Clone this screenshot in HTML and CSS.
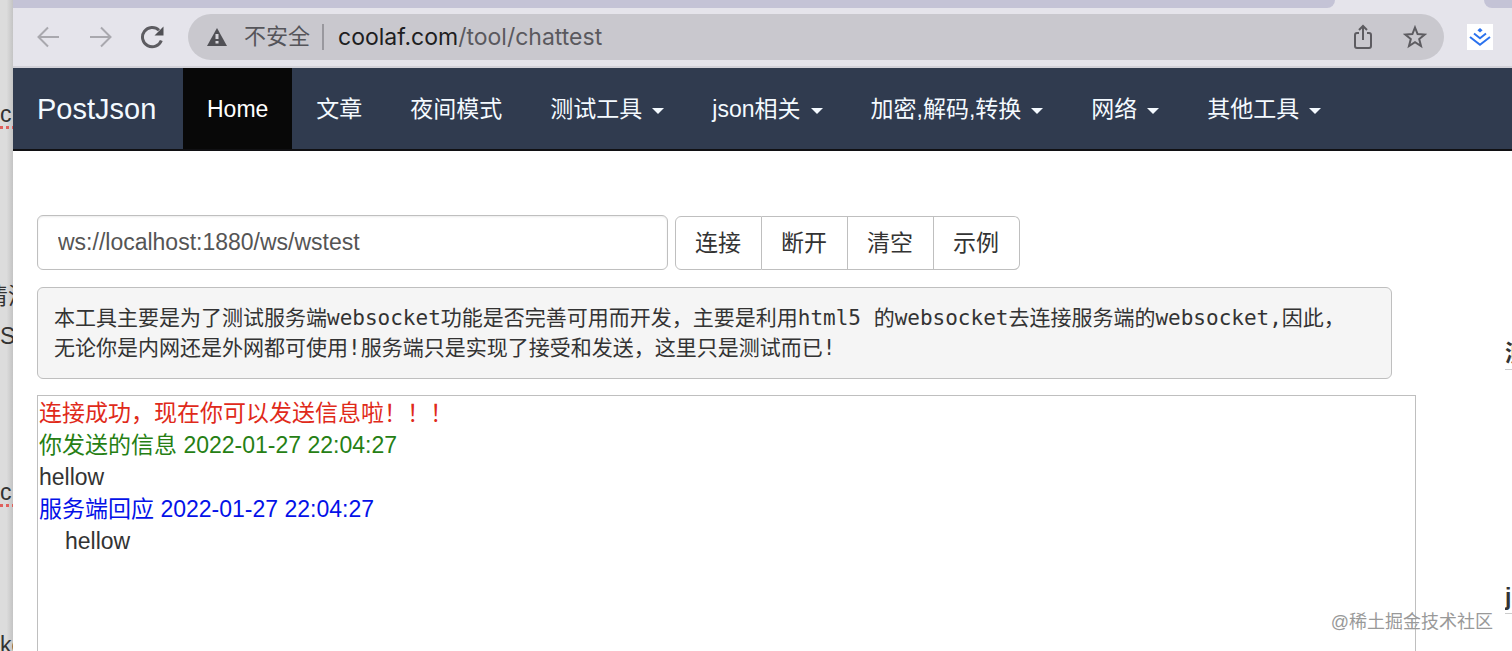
FILE: index.html
```html
<!DOCTYPE html>
<html lang="zh-CN">
<head>
    <meta charset="UTF-8">
    <meta name="viewport" content="width=device-width, initial-scale=1.0">
    <title>PostJson - websocket</title>
    <link rel="stylesheet" href="styles.css">
</head>
<body>
    <!-- document behind the browser window -->
    <div class="behind">
        <p class="misspelled first">c.</p>
        <p class="clipped">清清</p>
        <p class="next">S</p>
        <p class="misspelled later">c.</p>
        <p class="last">kc</p>
    </div>

    <div class="window">
        <div class="tab-strip">
            <div class="tabs-left"></div>
            <div class="tabs-right"></div>
        </div>

        <div class="toolbar">
            <button class="tool" type="button" aria-label="后退">
                <svg class="dim" width="24" height="24" viewBox="0 0 24 24"><path d="M23 12H3M12 2.500L2.500 12l9.500 9.500"/></svg>
            </button>
            <button class="tool" type="button" aria-label="前进">
                <svg class="dim" width="24" height="24" viewBox="0 0 24 24"><path d="M2 12h20M13 2.500l9.500 9.500-9.500 9.500"/></svg>
            </button>
            <button class="tool" type="button" aria-label="刷新">
                <svg class="reload" width="24" height="24" viewBox="0 0 24 24"><path d="M21.300 15.500A9.700 9.700 0 1 1 19 5.200"/><path class="solid" d="M23.500 1.500v9h-9z"/></svg>
            </button>
            <div class="omnibox">
                <svg class="warning" width="20" height="18" viewBox="0 0 20 18"><path class="solid" d="M10 0l10 18H0z"/><path class="mark" d="M10 6v5M10 13v2.500"/></svg>
                <span class="insecure">不安全</span>
                <span class="address">coolaf.com<span class="path">/tool/chattest</span></span>
                <button class="tool" type="button" aria-label="分享">
                    <svg width="24" height="26" viewBox="0 0 24 26"><path d="M8 9H6q-2 0-2 2v11q0 2 2 2h12q2 0 2-2V11q0-2-2-2h-2M12 16V2.500M8 6l4-4 4 4"/></svg>
                </button>
                <button class="tool" type="button" aria-label="收藏">
                    <svg width="24" height="24" viewBox="0 0 24 24"><path d="M12 2.500l2.600 6.600 7 .5-5.400 4.500 1.800 6.900-6-3.800-6 3.800 1.800-6.900L2.400 9.600l7-.5z"/></svg>
                </button>
            </div>
            <button class="extension" type="button" aria-label="稀土掘金">
                <svg width="26" height="26" viewBox="0 0 26 26"><path class="dot" d="M13 4l2.600 2.300L13 8.600l-2.600-2.300z"/><path d="M7 9.500l6 4.700 6-4.700M3 13l10 7.800L23 13"/></svg>
            </button>
        </div>

        <nav class="navbar">
            <a class="brand" href="#">PostJson</a>
            <a class="active" href="#">Home</a>
            <a href="#">文章</a>
            <a href="#">夜间模式</a>
            <a href="#">测试工具<span class="caret"></span></a>
            <a href="#">json相关<span class="caret"></span></a>
            <a href="#">加密,解码,转换<span class="caret"></span></a>
            <a href="#">网络<span class="caret"></span></a>
            <a href="#">其他工具<span class="caret"></span></a>
        </nav>

        <div class="content">
            <main class="main">
                <form class="connect">
                    <input class="form-control" type="text" aria-label="websocket地址" value="ws://localhost:1880/ws/wstest">
                    <div class="btn-group">
                        <button class="btn" type="button">连接</button>
                        <button class="btn" type="button">断开</button>
                        <button class="btn" type="button">清空</button>
                        <button class="btn" type="button">示例</button>
                    </div>
                </form>

                <pre class="intro">本工具主要是为了测试服务端websocket功能是否完善可用而开发，主要是利用html5 的websocket去连接服务端的websocket,因此，
无论你是内网还是外网都可使用!服务端只是实现了接受和发送，这里只是测试而已!</pre>

                <div class="log">
                    <p class="status">连接成功，现在你可以发送信息啦！！！</p>
                    <p class="sent">你发送的信息 2022-01-27 22:04:27</p>
                    <p>hellow</p>
                    <p class="received">服务端回应 2022-01-27 22:04:27</p>
                    <p class="reply">hellow</p>
                </div>
            </main>

            <aside class="sidebar">
                <h4>测试工具</h4>
                <h4>json相关</h4>
            </aside>
        </div>
    </div>

    <div class="watermark">@稀土掘金技术社区</div>
</body>
</html>
```
FILE: styles.css
```css
* {
    box-sizing: border-box;
}
body {
    display: flex;
    height: 100vh;
    margin: 0;
    overflow: hidden;
    background: #fff;
    color: #333;
    font-family: "Liberation Sans", "Noto Sans CJK SC", sans-serif;
    font-size: 23px;
    line-height: 32px;
}
p {
    margin: 0;
}
button {
    font: inherit;
    color: inherit;
}

/* document behind the window */
.behind {
    flex: 0 0 13px;
    overflow: hidden;
    white-space: nowrap;
    background: linear-gradient(to right, #dcdcdc 50%, #c4c4c4);
}
.behind .first {
    margin-top: 98px;
}
.behind .misspelled {
    text-decoration: underline dotted #e0605c 3px;
    text-underline-offset: 4px;
}
.behind .clipped {
    margin-top: 150px;
    text-indent: -15px;
}
.behind .next {
    margin-top: 8px;
}
.behind .later {
    margin-top: 124px;
}
.behind .last {
    margin-top: 121px;
}

/* browser chrome */
.window {
    display: flex;
    flex: 1;
    flex-direction: column;
    min-width: 0;
    background: #fff;
}
.tab-strip {
    display: flex;
    flex-shrink: 0;
    justify-content: space-between;
    height: 8px;
    background: #e5e4eb;
}
.tabs-left {
    flex: 1;
    margin-right: 149px;
    background: #c4c3d6;
    border-bottom-right-radius: 8px;
}
.tabs-right {
    width: 28px;
    background: #c4c3d6;
    border-bottom-left-radius: 8px;
}
.toolbar {
    display: flex;
    flex-shrink: 0;
    align-items: center;
    height: 60px;
    padding: 0 19px 0 23px;
    background: #e5e4eb;
    border-bottom: 2px solid #d2d1d8;
}
.tool,
.extension {
    display: flex;
    padding: 0;
    border: 0;
    background: none;
}
.tool {
    margin-right: 28px;
}
.toolbar svg {
    fill: none;
    stroke: #5d5c61;
    stroke-width: 2;
}
.toolbar .dim {
    stroke: #a9a8ae;
}
.toolbar .reload {
    stroke-width: 3;
}
.toolbar .solid {
    fill: #505055;
    stroke: none;
}
.toolbar .mark {
    stroke: #d5d4da;
    stroke-width: 3;
}
.omnibox {
    display: flex;
    flex: 1;
    align-items: center;
    height: 46px;
    margin: 0 23px 0 -4px;
    padding-left: 19px;
    background: #c9c8ce;
    border-radius: 23px;
}
.insecure {
    margin-left: 17px;
    padding-right: 12px;
    border-right: 2px solid #99989e;
    color: #55555a;
    font-size: 22px;
    line-height: 26px;
}
.address {
    flex: 1;
    margin-left: 14px;
    color: #1e1e22;
    font-family: Inter, "Noto Sans CJK SC", sans-serif;
}
.path {
    color: #5a595e;
}
.omnibox .tool:last-child {
    margin-right: 17px;
}
.extension {
    background: #fff;
}
.toolbar .extension svg {
    stroke: #2b72ee;
}
.toolbar .extension .dot {
    fill: #2b72ee;
    stroke: none;
}

/* site navigation */
.navbar {
    display: flex;
    flex-shrink: 0;
    background: #303b4f;
    border-bottom: 2px solid #101013;
    white-space: nowrap;
}
.navbar a {
    padding: 25px 24px 24px;
    color: #f4faff;
    text-decoration: none;
}
.navbar .brand {
    width: 170px;
    font-size: 29px;
}
.navbar .active {
    background: #080808;
    color: #fff;
}
.caret {
    display: inline-block;
    margin-left: 10px;
    border: 6px solid transparent;
    border-top-color: #f4faff;
    border-bottom: 0;
    vertical-align: middle;
}

/* page content */
.content {
    display: flex;
    flex: 1;
    gap: 89px;
    min-height: 0;
    padding-left: 24px;
}
.main {
    display: flex;
    flex: 1;
    flex-direction: column;
    min-width: 0;
    padding-top: 63px;
}
.connect {
    display: flex;
    align-items: center;
    gap: 7px;
}
.form-control {
    flex: 0 1 631px;
    min-width: 0;
    height: 55px;
    padding: 0 20px;
    border: 1px solid #bfbfbf;
    border-radius: 6px;
    background: #fff;
    color: #555;
    font: inherit;
    box-shadow: inset 0 1px 2px rgba(0, 0, 0, 0.08);
}
.btn-group {
    display: flex;
    margin-top: 2px;
}
.btn {
    height: 54px;
    padding: 0 20px 0 19px;
    border: 1px solid #bfbfbf;
    background: #fff;
}
.btn + .btn {
    border-left: 0;
}
.btn:first-child {
    border-radius: 6px 0 0 6px;
}
.btn:last-child {
    border-radius: 0 6px 6px 0;
}
.intro {
    margin: 17px 24px 16px 0;
    padding: 15px 16px;
    border: 1px solid #bfbfbf;
    border-radius: 6px;
    background: #f5f5f5;
    font-family: "DejaVu Sans Mono", "Noto Sans CJK SC", monospace;
    font-size: 21px;
    line-height: 30px;
    white-space: pre-wrap;
}
.log {
    flex: 1;
    padding: 1px;
    border: 1px solid #bfbfbf;
    border-bottom: 0;
}
.log .status {
    color: #e02a1a;
}
.log .sent {
    color: #267f14;
}
.log .received {
    color: #0412e8;
}
.log .reply {
    padding-left: 26px;
}

.sidebar {
    flex: 0 0 7px;
    padding-top: 186px;
    overflow: hidden;
    white-space: nowrap;
}
.sidebar h4 {
    margin: 0 0 211px;
    border-bottom: 1px solid #ccc;
    font-size: 23px;
}

.watermark {
    position: absolute;
    right: 19px;
    bottom: 13px;
    color: #999;
    font-size: 18px;
}
```
